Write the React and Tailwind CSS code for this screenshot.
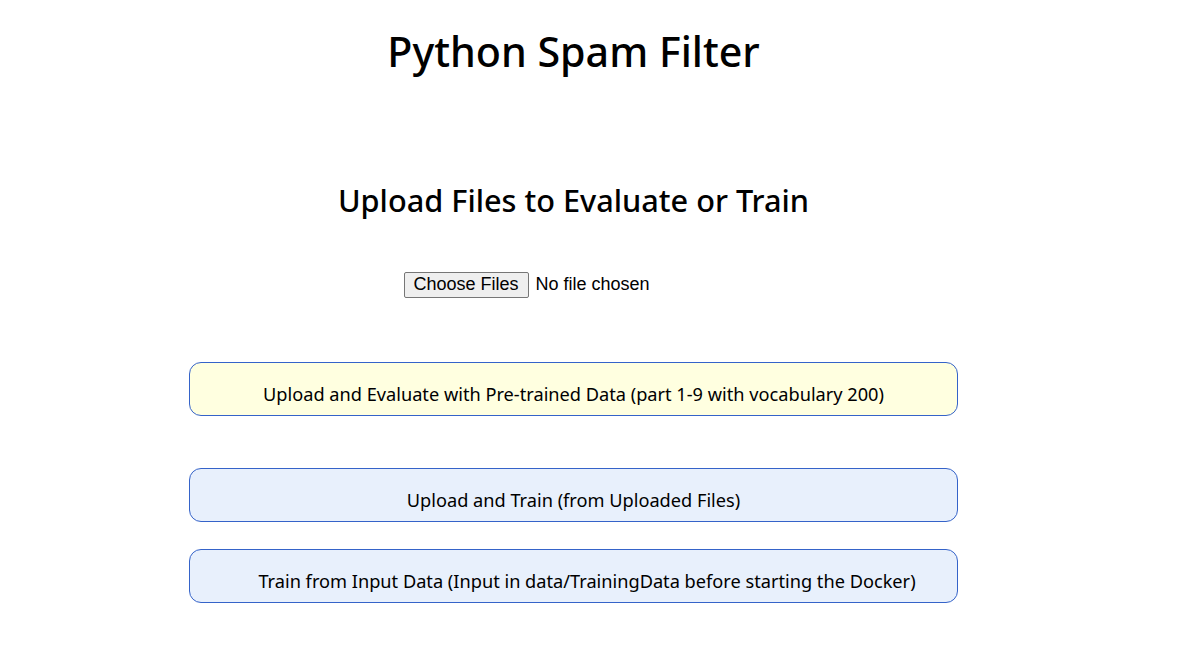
import React from 'react';

const font = { fontFamily: '"Noto Sans", "Open Sans", sans-serif' };

const ActionButton = ({ children, className = '' }) => (
  <button
    className={`w-[769px] h-[54px] rounded-[12px] border border-[#3563c9] pt-[12px] text-[18.2px] text-black ${className}`}
    style={font}
  >
    {children}
  </button>
);

const App = () => {
  return (
    <div className="w-[1147px] min-h-[672px] bg-white flex flex-col items-center">
      <h1 className="mt-[23px] text-[41.2px] leading-[56px] font-medium text-black" style={font}>
        Python Spam Filter
      </h1>

      <h2 className="mt-[100px] text-[30.7px] leading-[42px] font-medium text-black" style={font}>
        Upload Files to Evaluate or Train
      </h2>

      {/* File picker */}
      <div className="mt-[50px] w-[340px] flex items-center gap-[7px] font-['Liberation_Sans',sans-serif] text-[18px] text-black">
        <span className="h-[26px] px-[9px] flex items-center bg-[#efefef] border border-[#767676] rounded-[2px]">
          Choose Files
        </span>
        <span>No file chosen</span>
      </div>

      <div className="mt-[64px] flex flex-col">
        <ActionButton className="bg-[#ffffe0]">
          Upload and Evaluate with Pre-trained Data (part 1-9 with vocabulary 200)
        </ActionButton>
        <ActionButton className="mt-[52px] bg-[#e8f0fc]">
          Upload and Train (from Uploaded Files)
        </ActionButton>
        <ActionButton className="mt-[27px] bg-[#e8f0fc] pl-[27px]">
          Train from Input Data (Input in data/TrainingData before starting the Docker)
        </ActionButton>
      </div>
    </div>
  );
};

export default App;
